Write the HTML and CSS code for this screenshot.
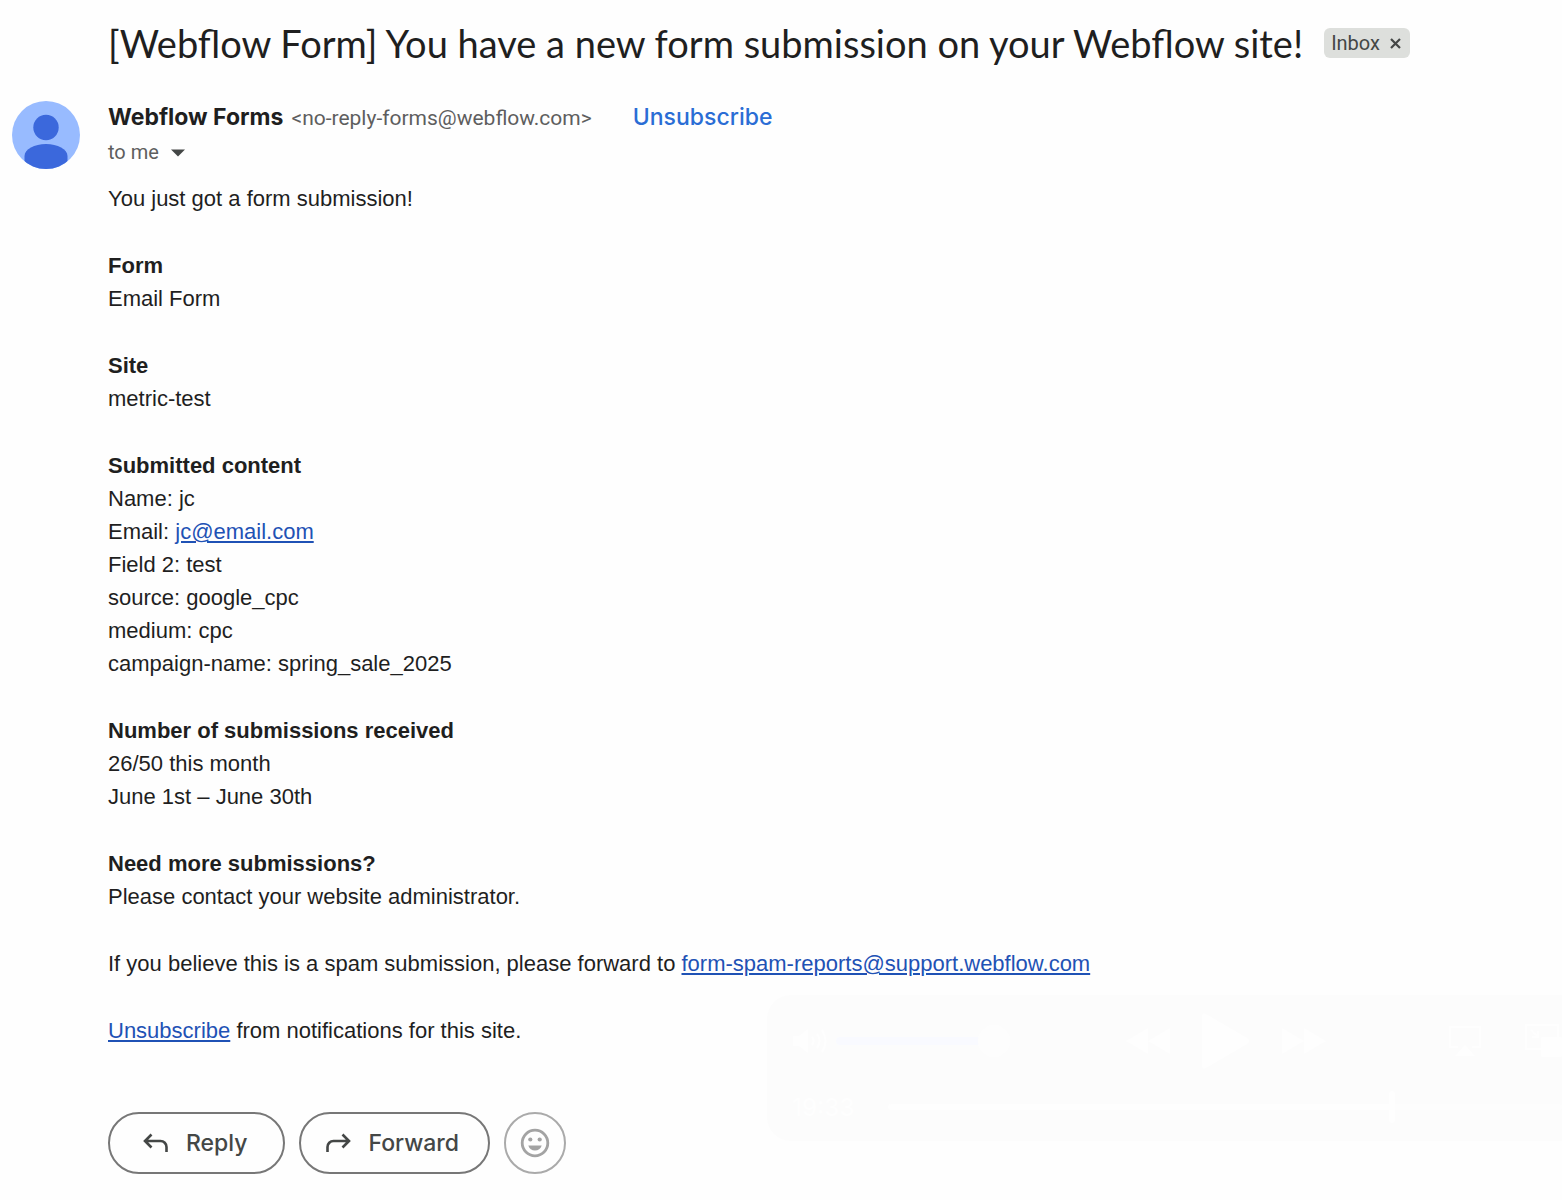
FILE: index.html
```
<!DOCTYPE html>
<html lang="en">

<head>
    <meta charset="UTF-8">
    <meta name="viewport" content="width=device-width, initial-scale=1.0">
    <title>[Webflow Form] You have a new form submission on your Webflow site!</title>
    <link rel="stylesheet" href="styles.css">
</head>

<body>
    <main class="message">
        <div class="subject">
            <h1>[Webflow Form] You have a new form submission on your Webflow site!</h1>
            <button class="label" type="button" aria-label="Remove label Inbox">Inbox
                <svg width="12" height="12" viewBox="0 0 12 12"><path d="M1 2l9 9M10 2l-9 9" stroke="#444746" stroke-width="2.200" /></svg>
            </button>
        </div>

        <svg class="avatar" viewBox="0 0 68 68">
            <clipPath id="avatarClip"><circle cx="34" cy="34" r="34" /></clipPath>
            <g clip-path="url(#avatarClip)">
                <rect width="68" height="68" fill="#98bbff" />
                <circle cx="34" cy="26.500" r="12.700" fill="#3b68dc" />
                <path d="M12.500 70V55c0-7 10-12 21.500-12s21.500 5 21.500 12v15z" fill="#3b68dc" />
            </g>
        </svg>

        <div class="content">
            <header class="sender">
                <div class="from">
                    <strong>Webflow Forms</strong>
                    <span class="address">&lt;no-reply-forms@webflow.com&gt;</span>
                    <a class="unsubscribe" href="#">Unsubscribe</a>
                </div>
                <button class="recipient" type="button">to me
                    <svg width="14" height="8" viewBox="0 0 14 8"><path d="M0 0.500h14l-7 7z" fill="#444746" /></svg>
                </button>
            </header>

            <div class="mail-body">
                <p>You just got a form submission!</p>
                <p><b>Form</b><br>Email Form</p>
                <p><b>Site</b><br>metric-test</p>
                <p>
                    <b>Submitted content</b><br>
                    Name: jc<br>
                    Email: <a href="mailto:jc@email.com">jc@email.com</a><br>
                    Field 2: test<br>
                    source: google_cpc<br>
                    medium: cpc<br>
                    campaign-name: spring_sale_2025
                </p>
                <p>
                    <b>Number of submissions received</b><br>
                    26/50 this month<br>
                    June 1st – June 30th
                </p>
                <p><b>Need more submissions?</b><br>Please contact your website administrator.</p>
                <p>If you believe this is a spam submission, please forward to <a href="mailto:form-spam-reports@support.webflow.com">form-spam-reports@support.webflow.com</a></p>
                <p><a href="#">Unsubscribe</a> from notifications for this site.</p>
            </div>

            <div class="actions">
                <button class="pill" type="button">
                    <svg width="25" height="20" viewBox="0 0 25 20"><path d="M8.500 1.500L2 8l6.500 6.500M2 8h15.500a6 6 0 0 1 6 6v5" /></svg>
                    Reply
                </button>
                <button class="pill" type="button">
                    <svg width="25" height="20" viewBox="0 0 25 20"><path d="M16.500 1.500L23 8l-6.500 6.500M23 8H7.500a6 6 0 0 0-6 6v5" /></svg>
                    Forward
                </button>
                <button class="pill react" type="button" aria-label="Add reaction">
                    <svg width="30" height="30" viewBox="0 0 30 30">
                        <circle cx="15" cy="15" r="12.800" fill="none" stroke="#a3a3a3" stroke-width="2.800" />
                        <circle cx="10.300" cy="11.500" r="2.100" fill="#a3a3a3" />
                        <circle cx="19.700" cy="11.500" r="2.100" fill="#a3a3a3" />
                        <path d="M8.300 17.500h13.400c-1 3.200-3.500 5-6.700 5s-5.700-1.800-6.700-5z" fill="#a3a3a3" />
                    </svg>
                </button>
            </div>
        </div>
    </main>

    <!-- Video controls, almost faded out -->
    <div class="player">
        <div class="player-row">
            <svg width="36" height="26" viewBox="0 0 36 26">
                <path d="M1 8h6l9-7v24l-9-7H1z" />
                <path d="M20 9q3 4 0 8M25 6q5 7 0 14M30 2q7 11 0 22" class="line" />
            </svg>
            <input class="volume" type="range" min="0" max="100" value="100" aria-label="Volume">
            <div class="transport">
                <button type="button" aria-label="Rewind"><svg width="44" height="28" viewBox="0 0 44 28"><path d="M22 1v26L0 14zM44 1v26L22 14z" /></svg></button>
                <button type="button" aria-label="Play"><svg width="48" height="56" viewBox="0 0 48 56"><path d="M0 3q0-4 4-2l41 24q4 3 0 6L4 55q-4 2-4-2z" /></svg></button>
                <button type="button" aria-label="Fast forward"><svg width="44" height="28" viewBox="0 0 44 28"><path d="M0 1v26l22-13zM22 1v26l22-13z" /></svg></button>
            </div>
            <div class="outputs">
                <button type="button" aria-label="AirPlay"><svg width="32" height="30" viewBox="0 0 32 30"><path class="line" d="M9 21H1V1h30v20h-8" /><path d="M16 19l10 11H6z" /></svg></button>
                <button type="button" aria-label="Picture in picture"><svg width="37" height="34" viewBox="0 0 37 34"><path class="line" d="M16 25H1V1h32v12M6 6l7 7M13 7v6H7" /><rect x="16" y="13" width="21" height="20" rx="2" /></svg></button>
            </div>
        </div>
        <div class="player-row">
            <span class="time">19:33</span>
            <input class="seek" type="range" min="0" max="100" value="75" aria-label="Position">
        </div>
    </div>
</body>

</html>
```
FILE: styles.css
```
* {
    box-sizing: border-box;
}

body {
    position: relative;
    margin: 0;
    min-height: 100vh;
    overflow-x: hidden;
    background: #fefefe;
    color: #1f1f1f;
    font-family: "Liberation Sans", Arial, sans-serif;
    font-size: 22px;
    line-height: 33px;
}

button {
    border: 0;
    padding: 0;
    background: none;
    cursor: pointer;
}

.message {
    display: grid;
    grid-template-columns: 68px 1fr;
    column-gap: 28px;
    padding: 20px 12px 24px;
}

.subject {
    grid-column: 2;
    display: flex;
    align-items: center;
    gap: 21px;
    margin-bottom: 34px;
}

.subject h1 {
    margin: 0;
    font-family: Lato, sans-serif;
    font-size: 38px;
    font-weight: 400;
    line-height: 46px;
}

.label {
    display: flex;
    align-items: center;
    gap: 10px;
    height: 30px;
    padding: 0 8px 0 7px;
    border-radius: 6px;
    background: #dddfdc;
    color: #444746;
    font-family: Roboto, sans-serif;
    font-size: 20px;
}

.avatar {
    width: 68px;
    height: 68px;
    margin-top: 1px;
}

.sender {
    margin-bottom: 13px;
    font-family: Roboto, sans-serif;
    color: #5e5e5e;
}

.from {
    display: flex;
    align-items: baseline;
    gap: 8px;
    line-height: 35px;
}

.from strong,
.unsubscribe {
    font-family: Inter, sans-serif;
    font-size: 23px;
}

.from strong {
    color: #1f1f1f;
}

.address {
    font-size: 21px;
}

.unsubscribe {
    margin-left: 33px;
    color: #2a6dd5;
    font-weight: 500;
    text-decoration: none;
}

.recipient {
    display: flex;
    align-items: center;
    gap: 12px;
    color: #5e5e5e;
    font-family: Roboto, sans-serif;
    font-size: 20px;
    line-height: 33px;
}

.mail-body p {
    margin: 0 0 34px;
}

.mail-body a {
    color: #1f52b5;
    text-decoration-thickness: 2px;
    text-underline-offset: 2px;
}

.actions {
    display: flex;
    gap: 14px;
    margin-top: 65px;
}

.pill {
    display: flex;
    align-items: center;
    gap: 18px;
    height: 62px;
    padding: 0 35px 0 33px;
    border: 2px solid #777;
    border-radius: 31px;
    color: #444746;
    font-family: Inter, sans-serif;
    font-size: 23px;
    font-weight: 500;
}

.pill path {
    fill: none;
    stroke: #444746;
    stroke-width: 2.6;
}

.pill + .pill {
    padding: 0 29px 0 25px;
}

.pill.react {
    width: 62px;
    padding: 0;
    justify-content: center;
    border-color: #aaa;
}

.pill.react path {
    fill: #a3a3a3;
    stroke: none;
}

/* Video controls */
.player {
    position: absolute;
    top: 995px;
    right: 0;
    width: 795px;
    height: 146px;
    padding: 16px 0 0 25px;
    border-radius: 24px 0 0 24px;
    background: #fcfcfc;
    color: #fefefe;
}

.player svg {
    display: block;
    flex-shrink: 0;
    fill: #fefefe;
}

.player .line {
    fill: none;
    stroke: #fefefe;
    stroke-width: 2;
}

.player-row {
    display: flex;
    align-items: center;
    height: 60px;
}

.player-row + .player-row {
    margin-top: 6px;
}

.transport {
    display: flex;
    align-items: center;
    gap: 32px;
    margin-left: 116px;
}

.outputs {
    display: flex;
    align-items: center;
    gap: 44px;
    margin-left: auto;
}

.player input {
    appearance: none;
    margin: 0;
    background: none;
}

.player .volume {
    width: 174px;
    margin-left: 8px;
}

.volume::-webkit-slider-runnable-track {
    height: 8px;
    border-radius: 4px;
    background: #f9faff;
}

.volume::-webkit-slider-thumb {
    appearance: none;
    width: 32px;
    height: 32px;
    margin-top: -12px;
    border-radius: 50%;
    background: #fdfdfd;
}

.time {
    width: 96px;
    font-family: Inter, sans-serif;
    font-size: 24px;
    font-weight: 500;
}

.seek {
    flex: 1;
}

.seek::-webkit-slider-runnable-track {
    height: 6px;
    border-radius: 3px;
    background: linear-gradient(to right, #fefefe 75%, #fdfdfd 75%);
}

.seek::-webkit-slider-thumb {
    appearance: none;
    width: 6px;
    height: 32px;
    margin-top: -13px;
    border-radius: 3px;
    background: #fefefe;
}
```
